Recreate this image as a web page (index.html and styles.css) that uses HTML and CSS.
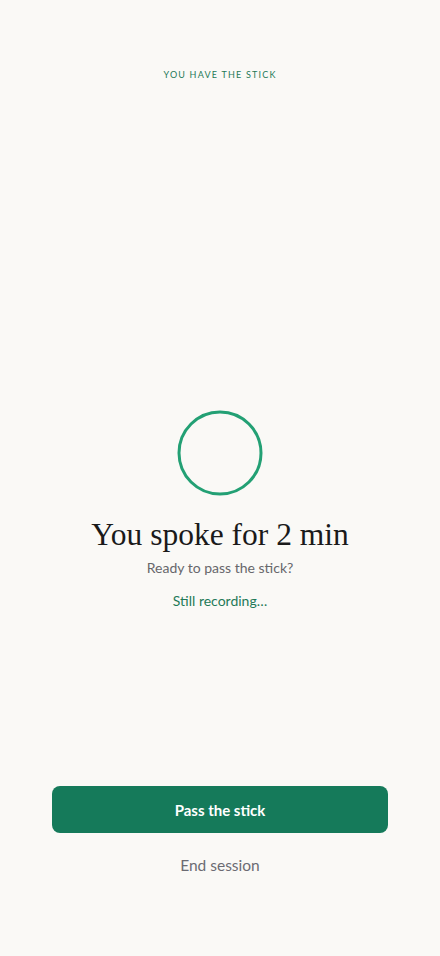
FILE: index.html
```html
<!DOCTYPE html>
<html lang="en">
<head>
<meta charset="utf-8">
<meta name="viewport" content="width=device-width, initial-scale=1">
<title>You have the stick</title>
<link rel="stylesheet" href="styles.css">
</head>
<body>
<main class="screen">
  <header class="top">
    <p class="eyebrow">YOU HAVE THE STICK</p>
  </header>
  <section class="center">
    <svg class="ring" width="86" height="86" viewBox="0 0 86 86" aria-hidden="true">
      <circle cx="43" cy="43" r="41" fill="none" stroke="#23a074" stroke-width="3"/>
    </svg>
    <h1 class="title">You spoke for 2 min</h1>
    <p class="subtitle">Ready to pass the stick?</p>
    <p class="status">Still recording…</p>
  </section>
  <footer class="actions">
    <button class="primary" type="button">Pass the stick</button>
    <button class="link" type="button">End session</button>
  </footer>
</main>
</body>
</html>
```
FILE: styles.css
```css
* { box-sizing: border-box; }
html, body { margin: 0; padding: 0; }
body {
  background: #faf9f6;
  font-family: "Lato", "Noto Sans", sans-serif;
  color: #1c1c1c;
}
.screen {
  min-height: 100vh;
  display: flex;
  flex-direction: column;
  padding: 69px 52px 74px;
}
.top { display: flex; justify-content: center; }
.eyebrow {
  margin: 0;
  font-size: 9px;
  letter-spacing: 1.2px;
  color: #1f7a58;
  line-height: 12px;
}
.center {
  flex: 1;
  display: flex;
  flex-direction: column;
  align-items: center;
  justify-content: center;
  padding-top: 153px;
}
.ring { display: block; }
.title {
  margin: 19px 0 0;
  font-family: "Liberation Serif", "DejaVu Serif", serif;
  font-weight: 400;
  font-size: 31.5px;
  line-height: 40px;
  color: #1a1a1a;
}
.subtitle {
  margin: 4px 0 0;
  font-size: 14px;
  line-height: 18px;
  color: #67676b;
}
.status {
  margin: 15px 0 0;
  font-size: 14px;
  line-height: 18px;
  color: #1f7a58;
}
.actions {
  display: flex;
  flex-direction: column;
  align-items: stretch;
  gap: 15px;
}
.primary {
  height: 47px;
  border: none;
  border-radius: 8px;
  background: #157a5a;
  color: #ffffff;
  font-family: inherit;
  font-size: 15px;
  font-weight: 700;
}
.link {
  height: 34px;
  border: none;
  background: none;
  color: #6b6b72;
  font-family: inherit;
  font-size: 15.5px;
}
```
